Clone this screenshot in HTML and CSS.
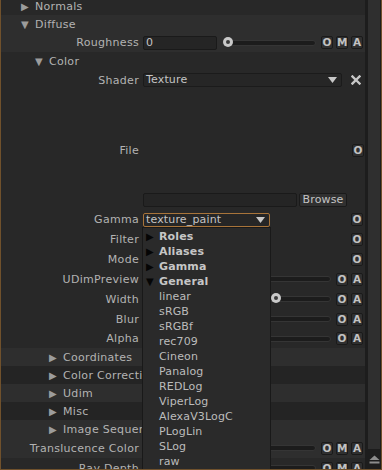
FILE: index.html
```html
<!DOCTYPE html>
<html lang="en">
<head>
    <meta charset="UTF-8">
    <title>Material Editor</title>
    <link rel="stylesheet" href="styles.css">
</head>
<body>
    <div class="panel">
        <div class="content">
            <div class="rows">
                <div class="row group lvl1"><span class="tri">&#9654;</span>Normals</div>
                <div class="row group lvl1 light"><span class="tri">&#9660;</span>Diffuse</div>
                <div class="row prop light h19">
                    <span class="lbl">Roughness</span>
                    <div class="ctrl">
                        <div class="field num">0</div>
                        <div class="slider"><span class="knob" style="left: 0px"></span></div>
                        <div class="btns"><span class="b">O</span><span class="b">M</span><span class="b">A</span></div>
                    </div>
                </div>
                <div class="row group lvl2"><span class="tri">&#9660;</span>Color</div>
                <div class="row prop">
                    <span class="lbl">Shader</span>
                    <div class="ctrl">
                        <div class="combo shader">Texture
                            <svg class="arrow" width="9" height="6" viewBox="0 0 9 6"><path d="M0 0 H9 L4.5 6 Z" fill="#c8c8c8"/></svg>
                        </div>
                        <svg class="close" width="10" height="10" viewBox="0 0 10 10">
                            <path d="M1.5 1.5 L8.5 8.5 M8.5 1.5 L1.5 8.5" stroke="#c8c8c8" stroke-width="2.4" stroke-linecap="square"/>
                        </svg>
                    </div>
                </div>
                <div class="row prop file">
                    <span class="lbl">File</span>
                    <div class="ctrl">
                        <div class="file-box">
                            <div class="preview"></div>
                            <div class="file-line">
                                <div class="field path"></div>
                                <span class="browse">Browse</span>
                            </div>
                        </div>
                        <div class="btns"><span class="b">O</span></div>
                    </div>
                </div>
                <div class="row prop h19">
                    <span class="lbl">Gamma</span>
                    <div class="ctrl">
                        <div class="combo gamma">texture_paint
                            <svg class="arrow" width="9" height="6" viewBox="0 0 9 6"><path d="M0 0 H9 L4.5 6 Z" fill="#c8c8c8"/></svg>
                        </div>
                        <div class="btns"><span class="b">O</span></div>
                    </div>
                </div>
                <div class="row prop">
                    <span class="lbl">Filter</span>
                    <div class="ctrl"><div class="btns"><span class="b">O</span></div></div>
                </div>
                <div class="row prop">
                    <span class="lbl">Mode</span>
                    <div class="ctrl"><div class="btns"><span class="b">O</span></div></div>
                </div>
                <div class="row prop">
                    <span class="lbl">UDimPreview</span>
                    <div class="ctrl">
                        <div class="slider"></div>
                        <div class="btns"><span class="b">O</span><span class="b">A</span></div>
                    </div>
                </div>
                <div class="row prop">
                    <span class="lbl">Width</span>
                    <div class="ctrl">
                        <div class="slider"><span class="knob" style="left: 127px"></span></div>
                        <div class="btns"><span class="b">O</span><span class="b">A</span></div>
                    </div>
                </div>
                <div class="row prop">
                    <span class="lbl">Blur</span>
                    <div class="ctrl">
                        <div class="slider"></div>
                        <div class="btns"><span class="b">O</span><span class="b">A</span></div>
                    </div>
                </div>
                <div class="row prop h19">
                    <span class="lbl">Alpha</span>
                    <div class="ctrl">
                        <div class="slider"></div>
                        <div class="btns"><span class="b">O</span><span class="b">A</span></div>
                    </div>
                </div>
                <div class="row group lvl3 light"><span class="tri">&#9654;</span>Coordinates</div>
                <div class="row group lvl3 dark"><span class="tri">&#9654;</span>Color Correction</div>
                <div class="row group lvl3 light"><span class="tri">&#9654;</span>Udim</div>
                <div class="row group lvl3 dark"><span class="tri">&#9654;</span>Misc</div>
                <div class="row group lvl3 light"><span class="tri">&#9654;</span>Image Sequence</div>
                <div class="row prop light">
                    <span class="lbl">Translucence Color</span>
                    <div class="ctrl">
                        <div class="slider"></div>
                        <div class="btns"><span class="b">O</span><span class="b">M</span><span class="b">A</span></div>
                    </div>
                </div>
                <div class="row prop">
                    <span class="lbl">Ray Depth</span>
                    <div class="ctrl">
                        <div class="slider"></div>
                        <div class="btns"><span class="b">O</span><span class="b">M</span><span class="b">A</span></div>
                    </div>
                </div>
            </div>

            <!-- colorspace popup opened from the Gamma combo -->
            <div class="menu">
                <div class="item head"><span class="mtri">&#9654;</span>Roles</div>
                <div class="item head"><span class="mtri">&#9654;</span>Aliases</div>
                <div class="item head"><span class="mtri">&#9654;</span>Gamma</div>
                <div class="item head"><span class="mtri">&#9660;</span>General</div>
                <div class="item">linear</div>
                <div class="item">sRGB</div>
                <div class="item">sRGBf</div>
                <div class="item">rec709</div>
                <div class="item">Cineon</div>
                <div class="item">Panalog</div>
                <div class="item">REDLog</div>
                <div class="item">ViperLog</div>
                <div class="item">AlexaV3LogC</div>
                <div class="item">PLogLin</div>
                <div class="item">SLog</div>
                <div class="item">raw</div>
            </div>
        </div>
        <div class="scrollbar">
            <div class="track"></div>
            <div class="sb-btn">
                <svg width="11" height="9" viewBox="0 0 11 9">
                    <path d="M5.5 0.5 L10.5 5 L0.5 5 Z" fill="#8c8c8c"/>
                    <rect x="0.5" y="6.5" width="10" height="2" fill="#8c8c8c"/>
                </svg>
            </div>
        </div>
    </div>
</body>
</html>
```

FILE: styles.css
```css
html, body {
    margin: 0;
    padding: 0;
    background: #1f1f1f;
}

body {
    width: 382px;
    height: 470px;
    overflow: hidden;
    font-family: "DejaVu Sans", sans-serif;
    font-size: 11px;
    letter-spacing: 0.15px;
    color: #b3b3b3;
}

.panel {
    display: flex;
    width: 380px;
    height: 469px;
    border-left: 1px solid #70512c;
    border-right: 1px solid #70512c;
    border-bottom: 1px solid #70512c;
    background: #282828;
    overflow: hidden;
}

.content {
    position: relative;
    flex: 1;
    overflow: hidden;
    border-right: 3px solid #1d1d1d;
}

.rows {
    margin-top: -3px;
}

.row {
    height: 20px;
    box-sizing: border-box;
    background: #282828;
}

.row.h19 {
    height: 19px;
}

.row.light {
    background: #2e2e2e;
}

.row.dark {
    background: #242424;
}

.group {
    height: 18px;
    display: flex;
    align-items: center;
    color: #b3b3b3;
    letter-spacing: 0.3px;
}

.lvl1 { padding-left: 20px; }
.lvl2 { padding-left: 34px; }
.lvl3 { padding-left: 48px; }

.tri {
    width: 14px;
    font-size: 10px;
    color: #9c9c9c;
}

.prop {
    display: grid;
    grid-template-columns: 138px 1fr;
    column-gap: 4px;
    align-items: center;
}

.lbl {
    text-align: right;
    white-space: nowrap;
    letter-spacing: 0.3px;
}

.ctrl {
    display: flex;
    align-items: center;
    gap: 5px;
    padding-right: 2px;
    height: 100%;
}

.field {
    box-sizing: border-box;
    height: 14px;
    background: #252525;
    border: 1px solid #1a1a1a;
    border-radius: 2px;
    color: #c4c4c4;
    line-height: 12px;
    padding-left: 2px;
}

.num {
    width: 74px;
}

.slider {
    position: relative;
    flex: 1;
    height: 4px;
    background: #1c1c1c;
    border: 1px solid #353535;
    border-radius: 3px;
}

.knob {
    position: absolute;
    top: -4px;
    width: 10px;
    height: 10px;
    box-sizing: border-box;
    border-radius: 50%;
    background: #c9c9c9;
}

.knob::after {
    content: "";
    position: absolute;
    left: 3px;
    top: 3px;
    width: 4px;
    height: 4px;
    border-radius: 50%;
    background: #3a3a3a;
}

.btns {
    display: flex;
    gap: 3px;
    margin-left: auto;
}

.b {
    box-sizing: border-box;
    width: 12px;
    height: 13px;
    background: #303030;
    border: 1px solid #1a1a1a;
    border-radius: 2px;
    color: #c2c2c2;
    font-weight: bold;
    font-size: 10.5px;
    letter-spacing: 0;
    line-height: 11px;
    text-align: center;
}

.combo {
    position: relative;
    box-sizing: border-box;
    height: 14px;
    background: #262626;
    border: 1px solid #1b1b1b;
    border-radius: 2px;
    color: #c4c4c4;
    line-height: 12px;
    padding-left: 2px;
}

.combo .arrow {
    position: absolute;
    right: 4px;
    top: 3px;
}

.shader {
    width: 199px;
}

.gamma {
    width: 127px;
    border-color: #a8743a;
}

.close {
    margin-left: auto;
    margin-right: 2px;
}

.file {
    height: 120px;
}

.file-box {
    display: flex;
    flex-direction: column;
    justify-content: flex-end;
    width: 204px;
    height: 100%;
    padding-bottom: 3px;
    box-sizing: border-box;
}

.file-line {
    display: flex;
    gap: 2px;
}

.path {
    width: 154px;
}

.browse {
    box-sizing: border-box;
    width: 48px;
    height: 14px;
    background: #303030;
    border: 1px solid #1a1a1a;
    border-radius: 2px;
    color: #c4c4c4;
    line-height: 12px;
    text-align: center;
}

.menu {
    position: absolute;
    left: 141px;
    top: 227px;
    width: 129px;
    height: 260px;
    box-sizing: border-box;
    padding-top: 1px;
    background: #2a2a2a;
    border: 1px solid #191919;
}

.item {
    height: 15px;
    line-height: 15px;
    padding-left: 16px;
    color: #bcbcbc;
}

.item.head {
    position: relative;
    font-weight: bold;
    color: #c6c6c6;
}

.mtri {
    position: absolute;
    left: 3px;
    font-size: 10px;
    font-weight: normal;
    color: #050505;
}

.scrollbar {
    display: flex;
    flex-direction: column;
    width: 13px;
    background: #1d1d1d;
}

.track {
    flex: 1;
    margin: 0 1px 0 0;
    background: #2f2f2f;
}

.sb-btn {
    height: 20px;
    display: flex;
    align-items: center;
    justify-content: center;
}
```
